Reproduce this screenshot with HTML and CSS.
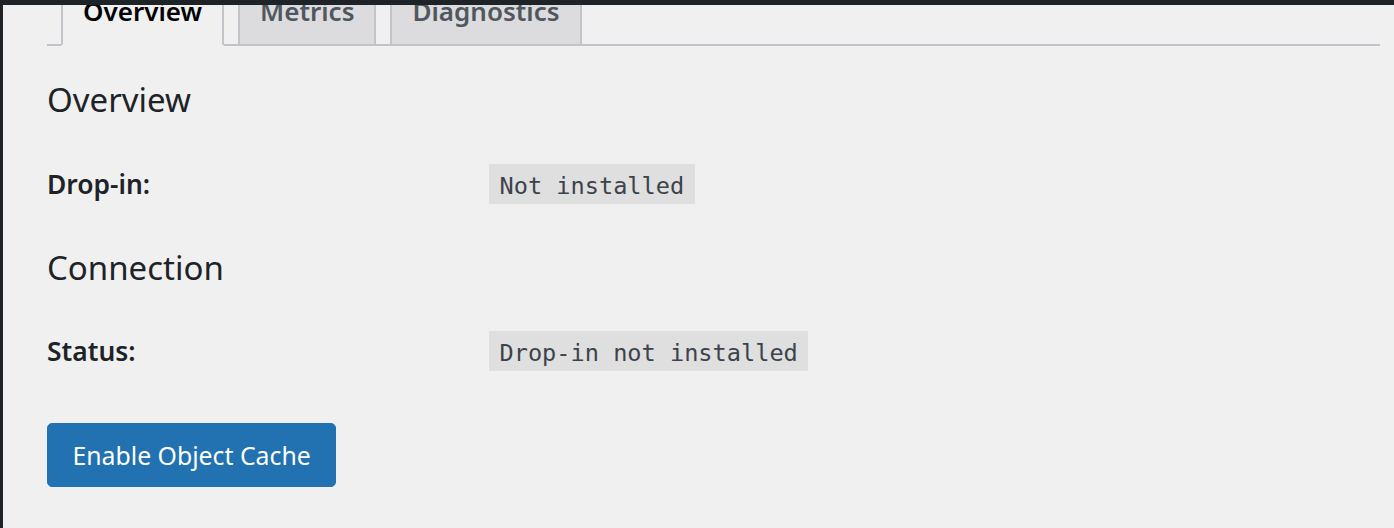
FILE: index.html
```html
<!DOCTYPE html>
<html lang="en">
<head>
<meta charset="utf-8">
<title>Object Cache</title>
<link rel="stylesheet" href="styles.css">
</head>
<body>
<div class="adminbar"></div>
<div class="layout">
  <div class="menu-edge"></div>
  <main class="wrap">
    <nav class="nav-tabs">
      <a class="nav-tab nav-tab-active">Overview</a>
      <a class="nav-tab">Metrics</a>
      <a class="nav-tab">Diagnostics</a>
    </nav>
    <section class="section">
      <h2 class="title">Overview</h2>
      <div class="row">
        <div class="label">Drop-in:</div>
        <code class="value">Not installed</code>
      </div>
    </section>
    <section class="section">
      <h2 class="title">Connection</h2>
      <div class="row">
        <div class="label">Status:</div>
        <code class="value">Drop-in not installed</code>
      </div>
    </section>
    <div class="actions">
      <button class="button-primary">Enable Object Cache</button>
    </div>
  </main>
</div>
</body>
</html>
```

FILE: styles.css
```css
html, body {
  margin: 0;
  padding: 0;
  height: 100%;
  overflow: hidden;
}
body {
  background: #f0f0f1;
  font-family: "Noto Sans", "Open Sans", sans-serif;
  color: #1d2327;
}
.adminbar {
  position: fixed;
  top: 0;
  left: 0;
  right: 0;
  height: 5px;
  background: #1d2327;
  z-index: 10;
}
.layout {
  display: flex;
  min-height: 100%;
}
.menu-edge {
  width: 3px;
  flex: none;
  background: #1d2327;
}
.wrap {
  flex: 1;
  padding: 0 14px 0 44px;
}
.nav-tabs {
  display: flex;
  align-items: flex-end;
  height: 44px;
  border-bottom: 2px solid #c3c4c7;
}
.nav-tab {
  flex: none;
  margin-left: 14px;
  margin-bottom: -2px;
  padding: 20px 20px 11px;
  line-height: 44px;
  font-size: 26px;
  font-weight: 600;
  color: #50575e;
  background: #dcdcde;
  border: 2px solid #c3c4c7;
  white-space: nowrap;
}
.nav-tab-active {
  color: #000;
  background: #f0f0f1;
  border-bottom-color: #f0f0f1;
}
.section {
  display: flex;
  flex-direction: column;
}
.title {
  margin: 34px 0 43.5px;
  font-size: 33px;
  line-height: 40px;
  font-weight: 400;
  color: #1d2327;
}
.section + .section .title {
  margin-top: 44px;
}
.row {
  display: flex;
  align-items: baseline;
}
.label {
  width: 442px;
  flex: none;
  font-size: 26.4px;
  line-height: 40px;
  font-weight: 600;
}
.value {
  display: inline-block;
  padding: 4px 10.5px 0;
  line-height: 36px;
  font-family: "DejaVu Sans Mono", "Liberation Mono", monospace;
  font-size: 23.6px;
  color: #3c434a;
  background: #dfdfe0;
}
.actions {
  margin-top: 52px;
}
.button-primary {
  display: inline-block;
  padding: 0 24.5px;
  height: 64px;
  line-height: 62px;
  font-family: "Noto Sans", "Open Sans", sans-serif;
  font-size: 24.8px;
  color: #fff;
  background: #2271b1;
  border: 1px solid #2271b1;
  border-radius: 5px;
  cursor: pointer;
}
```
